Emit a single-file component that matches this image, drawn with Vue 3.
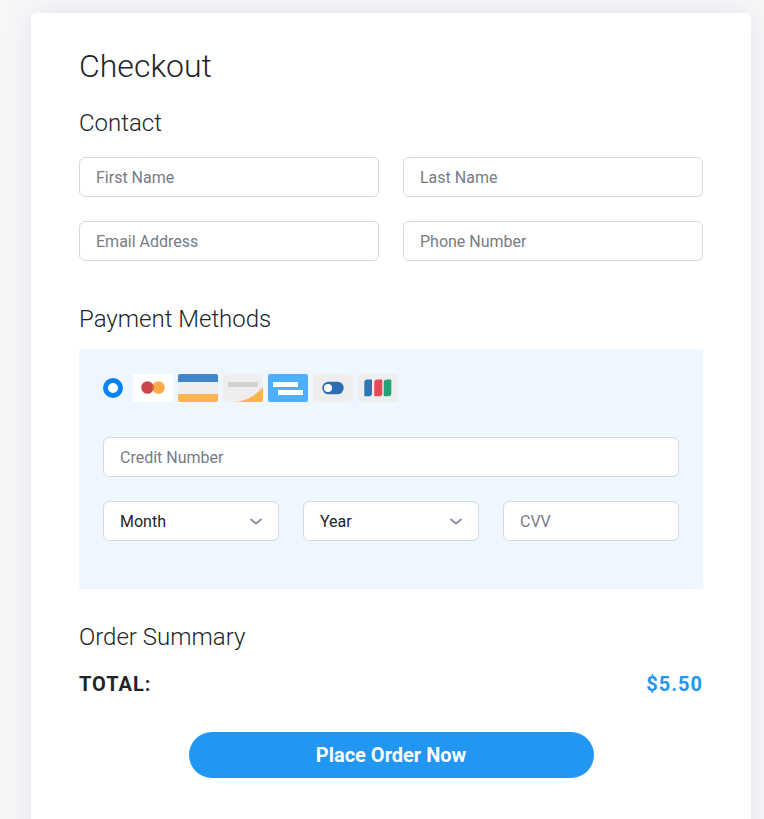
<script setup>
const chevron = 'M0.5 1 L6 5.5 L11.5 1'
</script>

<template>
  <div class="page">
    <main class="card">
      <h1 class="title">Checkout</h1>
      <h2 class="section first">Contact</h2>
      <div class="grid two">
        <input class="field" placeholder="First Name" />
        <input class="field" placeholder="Last Name" />
        <input class="field" placeholder="Email Address" />
        <input class="field" placeholder="Phone Number" />
      </div>

      <h2 class="section payment-title">Payment Methods</h2>
      <section class="panel">
        <div class="methods">
          <span class="radio"></span>
          <div class="icons">
            <svg class="pay" width="40" height="28" viewBox="0 0 40 28">
              <rect width="40" height="28" rx="2" fill="#fff" />
              <circle cx="25.5" cy="13.5" r="6.3" fill="#ffac47" />
              <circle cx="14.5" cy="13.5" r="6.3" fill="#cf4547" />
              <path d="M20 10.4a6.3 6.3 0 0 1 0 6.2a6.3 6.3 0 0 1 0-6.2z" fill="#d9743f" />
            </svg>
            <svg class="pay" width="40" height="28" viewBox="0 0 40 28">
              <rect width="40" height="28" rx="2" fill="#eeeeee" />
              <path d="M0 2a2 2 0 0 1 2-2h36a2 2 0 0 1 2 2v6H0z" fill="#4285c9" />
              <path d="M0 20h40v6a2 2 0 0 1-2 2H2a2 2 0 0 1-2-2z" fill="#ffb54f" />
            </svg>
            <svg class="pay" width="40" height="28" viewBox="0 0 40 28">
              <rect width="40" height="28" rx="2" fill="#eeeeee" />
              <rect x="5" y="8" width="30" height="5" fill="#d2d2d2" />
              <path d="M11 28C24 27 33 21 40 13V26a2 2 0 0 1-2 2z" fill="#ffb54f" />
            </svg>
            <svg class="pay" width="40" height="28" viewBox="0 0 40 28">
              <rect width="40" height="28" rx="2" fill="#4db0ff" />
              <rect x="5" y="8" width="25" height="5" fill="#fff" />
              <rect x="10" y="16" width="25" height="5" fill="#fff" />
            </svg>
            <svg class="pay" width="40" height="28" viewBox="0 0 40 28">
              <rect width="40" height="28" rx="2" fill="#eeeeee" />
              <rect x="9.3" y="7.7" width="21.4" height="12.6" rx="6.3" fill="#2a6db3" />
              <circle cx="15" cy="14" r="4" fill="#fff" />
            </svg>
            <svg class="pay" width="40" height="28" viewBox="0 0 40 28">
              <rect width="40" height="28" rx="2" fill="#eeeeee" />
              <path d="M6.3 8.500a3 3 0 0 1 3-3h4.700v13.700a3 3 0 0 1-3 3H6.300z" fill="#2b78b5" />
              <path d="M16.300 8.500a3 3 0 0 1 3-3h5v13.700a3 3 0 0 1-3 3h-5z" fill="#e54a5a" />
              <path d="M25.700 8.500a3 3 0 0 1 3-3h4.600v13.700a3 3 0 0 1-3 3h-4.600z" fill="#23a27a" />
            </svg>
          </div>
        </div>

        <input class="field wide" placeholder="Credit Number" />

        <div class="grid three">
          <div class="select">
            <span>Month</span>
            <svg width="12" height="7" viewBox="0 0 12 7"><path :d="chevron" /></svg>
          </div>
          <div class="select">
            <span>Year</span>
            <svg width="12" height="7" viewBox="0 0 12 7"><path :d="chevron" /></svg>
          </div>
          <input class="field" placeholder="CVV" />
        </div>
      </section>

      <h2 class="section summary-title">Order Summary</h2>
      <div class="total">
        <span>TOTAL:</span>
        <span class="amount">$5.50</span>
      </div>
      <div class="actions">
        <button class="order" type="button">Place Order Now</button>
      </div>
    </main>
  </div>
</template>

<style scoped>
.page {
  height: 819px;
  overflow: hidden;
  box-sizing: border-box;
  padding: 13px 13px 0 31px;
  background: #f5f7f9;
  font-family: Roboto, "Liberation Sans", sans-serif;
}
.card {
  width: 720px;
  height: 900px;
  box-sizing: border-box;
  padding: 30px 48px 0;
  background: #fff;
  border-radius: 6px;
  box-shadow: 0 0 30px rgba(20, 30, 50, 0.08);
}
.title {
  margin: 0;
  font-size: 32px;
  line-height: 46px;
  font-weight: 300;
  color: #212529;
}
.section {
  margin: 0;
  font-size: 24px;
  line-height: 32px;
  font-weight: 300;
  color: #212529;
}
.first { margin-top: 18px; }
.grid { display: grid; gap: 24px; }
.two { grid-template-columns: 300px 300px; margin-top: 18px; }
.three { grid-template-columns: 176px 176px 176px; margin-top: 24px; }
.field, .select {
  box-sizing: border-box;
  height: 40px;
  border: 1px solid #d5dae2;
  border-radius: 6px;
  background: #fff;
  padding: 0 16px;
  font: 400 16px Roboto, "Liberation Sans", sans-serif;
  color: #212529;
  outline: none;
  min-width: 0;
  width: 100%;
}
.field::placeholder { color: #757c85; opacity: 1; }
.select {
  display: flex;
  align-items: center;
  justify-content: space-between;
}
.select svg { fill: none; stroke: #8d94a3; stroke-width: 2; }
.payment-title { margin-top: 42px; }
.panel {
  margin-top: 14px;
  height: 240px;
  box-sizing: border-box;
  padding: 25px 24px 0;
  background: #eef6ff;
}
.methods { display: flex; align-items: center; gap: 10px; height: 28px; }
.radio {
  width: 20px;
  height: 20px;
  box-sizing: border-box;
  border: 5px solid #0a84f5;
  border-radius: 50%;
  background: #fff;
}
.icons { display: flex; gap: 5px; }
.pay { display: block; }
.wide { display: block; margin-top: 35px; }
.summary-title { margin-top: 32px; }
.total {
  display: flex;
  justify-content: space-between;
  margin-top: 19px;
  font-size: 20px;
  line-height: 24px;
  font-weight: 700;
  letter-spacing: 1px;
  color: #212529;
}
.amount { color: #2196f3; }
.actions { display: flex; justify-content: center; margin-top: 36px; padding-left: 1px; }
.order {
  width: 405px;
  height: 46px;
  padding: 0 1px 0 0;
  border: 0;
  border-radius: 23px;
  background: #2196f3;
  color: #fff;
  font: 700 20px Roboto, "Liberation Sans", sans-serif;
}
</style>
